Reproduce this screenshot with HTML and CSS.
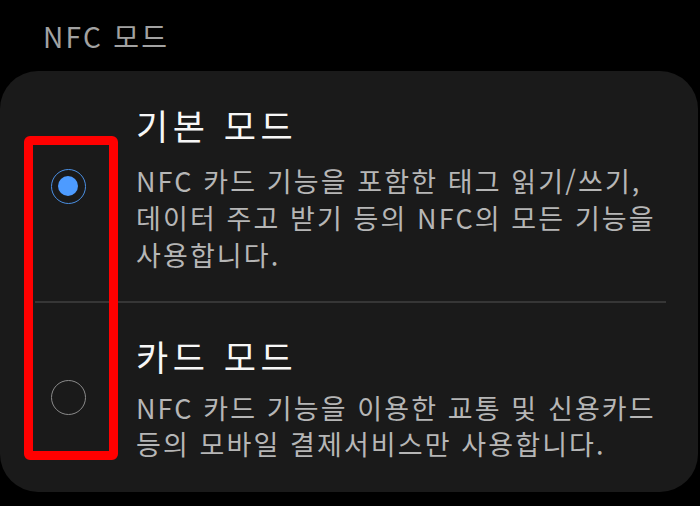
FILE: index.html
```html
<!DOCTYPE html>
<html lang="ko">
<head>
<meta charset="utf-8">
<title>NFC 모드</title>
<link rel="stylesheet" href="styles.css">
</head>
<body>
  <div class="screen">
    <h2 class="section-title">NFC 모드</h2>
    <div class="card">
      <label class="option option-first">
        <span class="radio-col"><span class="radio radio-on"></span></span>
        <span class="option-text">
          <span class="option-title">기본 모드</span>
          <span class="option-desc">NFC 카드 기능을 포함한 태그 읽기/쓰기, 데이터 주고 받기 등의 NFC의 모든 기능을 사용합니다.</span>
        </span>
      </label>
      <div class="divider"></div>
      <label class="option option-second">
        <span class="radio-col"><span class="radio"></span></span>
        <span class="option-text">
          <span class="option-title">카드 모드</span>
          <span class="option-desc">NFC 카드 기능을 이용한 교통 및 신용카드 등의 모바일 결제서비스만 사용합니다.</span>
        </span>
      </label>
      <div class="highlight-box"></div>
    </div>
  </div>
</body>
</html>
```
FILE: styles.css
```css
html, body {
  margin: 0;
  padding: 0;
  background: #000;
}

.screen {
  width: 700px;
  height: 506px;
  overflow: hidden;
  font-family: "Noto Sans CJK KR", "Noto Sans", sans-serif;
}

.section-title {
  margin: 0;
  padding: 16px 0 15px 43px;
  height: 40px;
  font-size: 28px;
  line-height: 40px;
  font-weight: 400;
  letter-spacing: 2.3px;
  color: #a2a2a2;
}

.card {
  position: relative;
  width: 698px;
  height: 421px;
  background: #1a1a1a;
  border-radius: 38px;
  box-sizing: border-box;
}

.option {
  display: flex;
  align-items: stretch;
  box-sizing: border-box;
}

.option-first {
  height: 230px;
  padding-top: 31px;
}

.option-second {
  height: 189px;
  padding-top: 30px;
}

.radio-col {
  width: 136px;
  flex: none;
  display: flex;
  align-items: center;
  justify-content: center;
}

.option-first .radio-col { margin-top: -31px; }
.option-second .radio-col { margin-top: -30px; }

.radio {
  position: relative;
  width: 35px;
  height: 35px;
  border-radius: 50%;
  border: 1.5px solid #8a8a8a;
  box-sizing: border-box;
}

.radio-on {
  border-color: #4a8fe3;
}

.radio-on::after {
  content: "";
  position: absolute;
  left: 6px;
  top: 6px;
  width: 20px;
  height: 20px;
  border-radius: 50%;
  background: #4d9bff;
}

.option-text {
  display: flex;
  flex-direction: column;
  padding-right: 28px;
  word-break: keep-all;
}

.option-title {
  font-size: 35px;
  line-height: 46px;
  font-weight: 400;
  letter-spacing: 4.5px;
  color: #f7f7f7;
}

.option-desc {
  margin-top: 14px;
  font-size: 27px;
  line-height: 37px;
  letter-spacing: 2.1px;
  color: #b6b6b6;
}

.option-second .option-desc {
  margin-top: 11px;
  line-height: 36px;
}

.divider {
  height: 2px;
  margin: 0 32px 0 35px;
  background: #363636;
}

.highlight-box {
  position: absolute;
  left: 24px;
  top: 65px;
  width: 94px;
  height: 324px;
  border: 9px solid #ff0000;
  border-radius: 6px;
  box-sizing: border-box;
}
```
